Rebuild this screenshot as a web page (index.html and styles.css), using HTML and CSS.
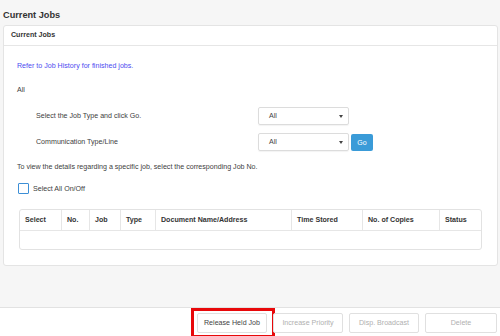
FILE: index.html
```html
<!DOCTYPE html>
<html lang="en">

<head>
    <meta charset="UTF-8">
    <meta name="viewport" content="width=device-width,initial-scale=1.0">
    <title>Current Jobs</title>
    <link rel="stylesheet" href="styles.css">
</head>

<body>
    <h1 class="page_title">Current Jobs</h1>

    <!-- job list panel -->
    <section class="panel">
        <div class="panel_head">Current Jobs</div>
        <div class="panel_body">
            <p class="link_text">Refer to Job History for finished jobs.</p>
            <p class="filter_name">All</p>

            <div class="form_row">
                <label class="form_label">Select the Job Type and click Go.</label>
                <span class="select_box"><span>All</span></span>
            </div>
            <div class="form_row row_second">
                <label class="form_label">Communication Type/Line</label>
                <span class="select_box"><span>All</span></span>
                <button class="btn_go">Go</button>
            </div>

            <p class="hint">To view the details regarding a specific job, select the corresponding Job No.</p>

            <label class="check_all">
                <span class="check_box"></span>
                Select All On/Off
            </label>

            <table class="job_table">
                <thead>
                    <tr>
                        <th class="c_select">Select</th>
                        <th class="c_no">No.</th>
                        <th class="c_job">Job</th>
                        <th class="c_type">Type</th>
                        <th class="c_doc">Document Name/Address</th>
                        <th class="c_time">Time Stored</th>
                        <th class="c_copies">No. of Copies</th>
                        <th class="c_status">Status</th>
                    </tr>
                </thead>
                <tbody>
                    <tr>
                        <td colspan="8"></td>
                    </tr>
                </tbody>
            </table>
        </div>
    </section>

    <!-- bottom action bar -->
    <footer class="action_bar">
        <button class="btn_action marked">Release Held Job</button>
        <button class="btn_action" disabled>Increase Priority</button>
        <button class="btn_action" disabled>Disp. Broadcast</button>
        <button class="btn_action btn_wide" disabled>Delete</button>
    </footer>
</body>

</html>
```

FILE: styles.css
```css
* {
    padding: 0;
    margin: 0;
    box-sizing: border-box;
}

html,
body {
    height: 100%;
}

body {
    display: flex;
    flex-direction: column;
    min-height: 336px;
    background-color: #f6f6f6;
    font-family: "Liberation Sans", Arial, sans-serif;
    font-size: 7.1px;
    color: #404040;
}

.page_title {
    padding: 10px 3px 0;
    font-size: 9.2px;
    line-height: 10px;
    color: #333333;
}

.panel {
    margin: 5px 2px 0 3px;
    background-color: #ffffff;
    border: 1px solid #e4e4e4;
    border-radius: 3px;
}

.panel_head {
    height: 20px;
    padding-left: 7px;
    line-height: 19px;
    font-weight: bold;
    color: #333333;
    border-bottom: 1px solid #e6e6e6;
}

.panel_body {
    padding: 15px 15px 15px 13px;
}

.panel_body p {
    line-height: 10px;
}

.link_text {
    color: #4d4df0;
}

.filter_name {
    margin-top: 14px;
}

.form_row {
    display: flex;
    align-items: center;
    height: 18px;
    margin-top: 12px;
    padding-left: 19px;
}

.row_second {
    margin-top: 8px;
}

.form_label {
    width: 222px;
}

.select_box {
    position: relative;
    width: 91px;
    height: 18px;
    padding-left: 10px;
    line-height: 16px;
    color: #444444;
    border: 1px solid #dcdcdc;
    border-radius: 2px;
    box-shadow: 0 1px 1px rgba(0, 0, 0, 0.05);
}

.select_box::after {
    content: "";
    position: absolute;
    right: 5px;
    top: 7px;
    border-top: 3px solid #444444;
    border-left: 2px solid transparent;
    border-right: 2px solid transparent;
}

.btn_go {
    width: 22px;
    height: 17px;
    margin-left: 2px;
    font-family: inherit;
    font-size: 7px;
    color: #ffffff;
    background-color: #3a9bd8;
    border: none;
    border-radius: 2px;
}

.hint {
    margin-top: 11px;
}

.check_all {
    display: flex;
    align-items: center;
    gap: 4px;
    height: 11px;
    margin: 11px 0 0 1px;
}

.check_box {
    width: 11px;
    height: 11px;
    border: 1.5px solid #3d8fd6;
    border-radius: 1px;
}

.job_table {
    width: 463px;
    margin: 15px 0 0 2px;
    border-collapse: separate;
    border-spacing: 0;
    border: 1px solid #e2e2e2;
    border-radius: 3px;
    table-layout: fixed;
}

.job_table th {
    height: 21px;
    padding-left: 5px;
    text-align: left;
    font-weight: bold;
    color: #333333;
    border-bottom: 1px solid #e6e6e6;
    border-right: 1px solid #e6e6e6;
}

.job_table th:last-child {
    border-right: none;
}

.job_table td {
    height: 18px;
}

.c_select { width: 42px; }
.c_no { width: 28px; }
.c_job { width: 31px; }
.c_type { width: 35px; }
.c_doc { width: 136px; }
.c_time { width: 71px; }
.c_copies { width: 77px; }

.action_bar {
    display: flex;
    justify-content: flex-end;
    gap: 6px;
    height: 29px;
    margin-top: auto;
    padding: 5px 3px 0 0;
    background-color: #ffffff;
    border-top: 1px solid #e2e2e2;
}

.btn_action {
    position: relative;
    width: 70px;
    height: 20px;
    font-family: inherit;
    font-size: 7.1px;
    color: #b0b0b0;
    background-color: #ffffff;
    border: 1px solid #e0e0e0;
    border-radius: 2px;
}

.btn_wide {
    width: 72px;
}

.marked {
    color: #444444;
}

/* red highlight around the selected action */
.marked::after {
    content: "";
    position: absolute;
    left: -7px;
    right: -9px;
    top: -6px;
    bottom: -6px;
    border: 3px solid #e8080a;
}
```
